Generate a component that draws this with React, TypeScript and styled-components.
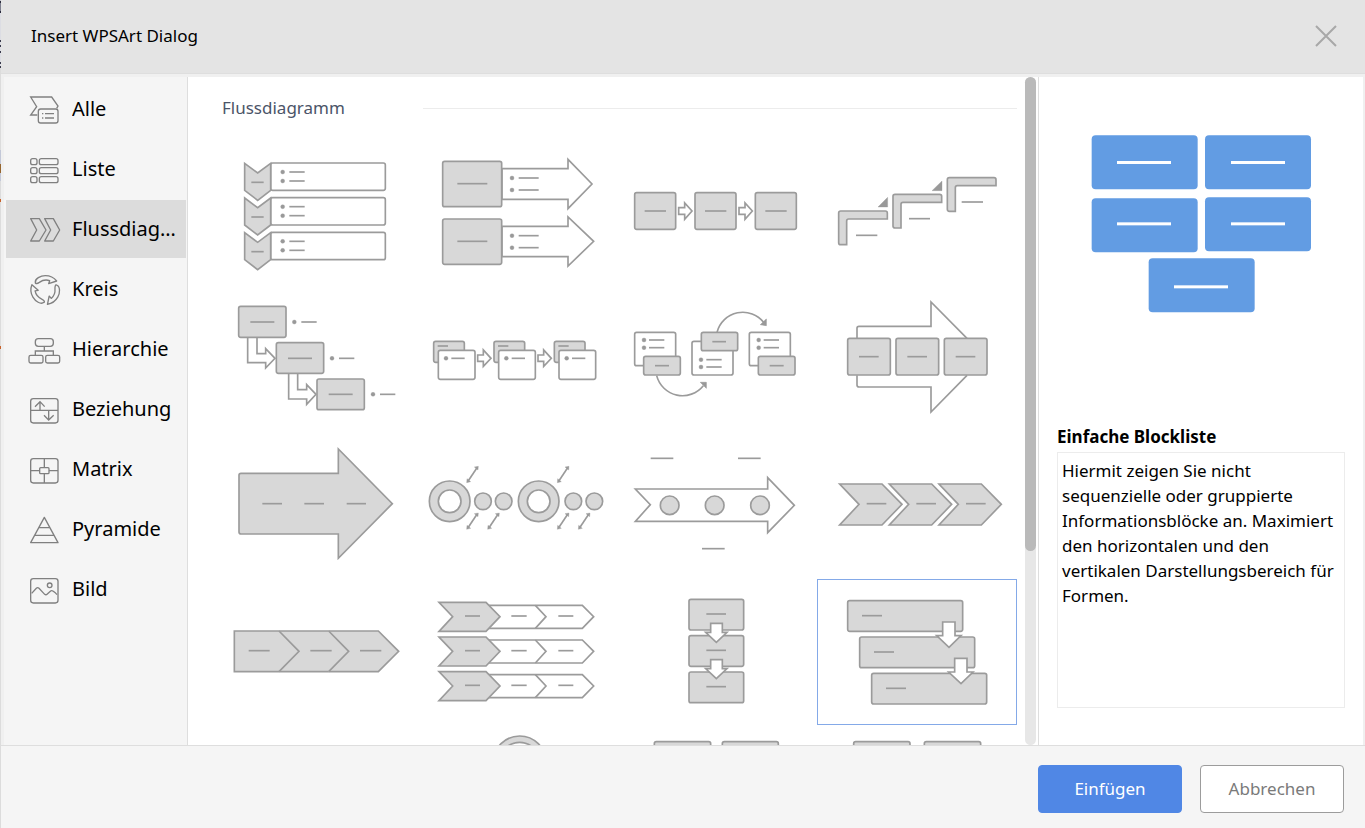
import React, { useState } from 'react';
import styled, { createGlobalStyle } from 'styled-components';

const GlobalStyle = createGlobalStyle`
  *, *::before, *::after { box-sizing: border-box; }
  body { margin: 0; }
  body, button, textarea { font-family: "Noto Sans", "Open Sans", sans-serif; }
`;

/* ---------- layout ---------- */

const Shell = styled.div`
  display: flex;
  height: 100vh;
  min-height: 480px;
  background: #f0f0f0;
  color: #000;
`;

/* Sliver of the document that shows beside the dialog. */
const DocumentEdge = styled.div`
  flex: 0 0 1px;
  background: linear-gradient(
    #c4c5ce 0 1px, #2a2b3c 1px 3px, #7d7f8e 3px 11px, #2a2b3c 11px 13px,
    #dcdde3 13px 40px, #3a3b4c 40px 42px, #dcdde3 42px 45px, #3a3b4c 45px 47px,
    #dcdde3 47px 51px, #3a3b4c 51px 53px, #dcdde3 53px 62px, #3a3b4c 62px 64px,
    #dcdde3 64px 66px, #3a3b4c 66px 68px, #dcdcdc 68px 150px, #c3c8d8 150px 164px,
    #96662f 164px 173px, #c3c8d8 173px 181px, #dcdcdc 181px 199px,
    #c8622a 199px 202px, #dcdcdc 202px 346px, #c8622a 346px 349px, #dcdcdc 349px
  );
`;

const Dialog = styled.section`
  flex: 1;
  min-width: 0;
  display: flex;
  flex-direction: column;
`;

const TitleBar = styled.header`
  flex: 0 0 74px;
  display: flex;
  align-items: center;
  justify-content: space-between;
  padding: 0 28px 2px 30px;
  background: #e4e4e4;
  border-bottom: 1px solid #dedede;
`;

const DialogTitle = styled.h1`
  margin: 0;
  font-size: 17px;
  line-height: 24px;
  font-weight: 400;
`;

const CloseButton = styled.button`
  display: flex;
  padding: 0;
  border: 0;
  background: none;
  cursor: pointer;
`;

const Body = styled.div`
  flex: 1;
  min-height: 0;
  display: flex;
  margin: 3px 2px 0 3px;
  background: #fff;
`;

const Sidebar = styled.nav`
  flex: 0 0 184px;
  min-width: 0;
  display: flex;
  flex-direction: column;
  gap: 2px;
  padding: 3px 1px 0 2px;
  background: #f5f5f5;
  border-right: 1px solid #dedede;
`;

const NavItem = styled.button<{ $active: boolean }>`
  flex: 0 0 58px;
  display: flex;
  align-items: center;
  gap: 10px;
  padding: 0 8px 0 22px;
  border: 0;
  background: ${(p) => (p.$active ? '#dcdcdc' : 'transparent')};
  color: #000;
  font-size: 20px;
  line-height: 28px;
  text-align: left;
  cursor: pointer;
`;

const NavLabel = styled.span`
  flex: 1;
  min-width: 0;
  overflow: hidden;
  text-overflow: ellipsis;
  white-space: nowrap;
`;

const NavIcon = styled.svg`
  flex: none;
  width: 34px;
  height: 34px;
  fill: none;
  stroke: #808080;
  stroke-width: 4px;
`;

const Gallery = styled.main`
  flex: 1;
  min-width: 0;
  overflow-y: auto;
  scrollbar-width: none;
  padding: 0 8px 0 29px;
`;

const GalleryHeading = styled.div`
  display: flex;
  align-items: center;
  height: 64px;
  padding: 0 0 2px 5px;
`;

const GalleryTitle = styled.h2`
  flex: 0 0 201px;
  margin: 0;
  color: #4b5468;
  font-size: 17px;
  line-height: 24px;
  font-weight: 400;
`;

const Rule = styled.hr`
  flex: 1;
  height: 1px;
  margin: 0;
  border: 0;
  background: #ececec;
`;

const Grid = styled.div`
  display: grid;
  grid-template-columns: repeat(4, 1fr);
  grid-auto-rows: 146px;
`;

const Tile = styled.button<{ $selected: boolean }>`
  display: flex;
  align-items: center;
  justify-content: center;
  min-width: 0;
  padding: 0;
  border: 0;
  outline: ${(p) => (p.$selected ? '1px solid #84a9e8' : 'none')};
  outline-offset: -1px;
  background: #fff;
  cursor: pointer;
`;

const Drawing = styled.svg`
  width: 200px;
  max-width: 100%;
  height: 146px;
  stroke: #9b9b9b;
  stroke-width: 5px;
  fill: #d8d8d8;
`;

const ScrollTrack = styled.div`
  flex: 0 0 11px;
  margin-right: 2px;
  border-radius: 6px;
  background: #e7e7e7;
`;

const ScrollThumb = styled.div`
  height: 71%;
  border-radius: 6px;
  background: #bababa;
`;

const Details = styled.aside`
  flex: 0 0 325px;
  display: flex;
  flex-direction: column;
  padding: 57px 18px 37px;
  border-left: 1px solid #dedede;
`;

const Preview = styled.svg`
  flex: none;
  align-self: center;
  width: 222px;
  height: 180px;
  fill: #629ce3;
`;

const DetailsTitle = styled.label`
  margin-top: 111px;
  margin-bottom: 3px;
  font-size: 17px;
  line-height: 24px;
  font-weight: 700;
`;

const Description = styled.textarea`
  flex: 1;
  min-height: 0;
  padding: 5px 4px;
  border: 1px solid #ececec;
  outline: none;
  resize: none;
  overflow: hidden;
  background: #fff;
  color: #000;
  font-size: 17px;
  line-height: 25px;
`;

const Footer = styled.footer`
  display: flex;
  justify-content: flex-end;
  gap: 18px;
  padding: 19px 21px 15px;
  background: #f5f5f5;
  border-top: 1px solid #dedede;
`;

const ActionButton = styled.button<{ $primary?: boolean }>`
  width: 144px;
  height: 48px;
  border: 1px solid ${(p) => (p.$primary ? '#5087e5' : '#9c9c9c')};
  border-radius: 4px;
  background: ${(p) => (p.$primary ? '#5087e5' : '#fff')};
  color: ${(p) => (p.$primary ? '#fff' : '#7a7a7a')};
  font-size: 17px;
  line-height: 24px;
  cursor: pointer;
`;

/* ---------- drawing parts (three units to a pixel) ---------- */

type BoxProps = { x: number; y: number; w: number; h: number; white?: boolean };
const Box = ({ x, y, w, h, white }: BoxProps) => (
  <rect x={x} y={y} width={w} height={h} rx={6} fill={white ? '#fff' : undefined} />
);

const Dash = ({ x, y, w }: { x: number; y: number; w: number }) => (
  <path d={`M${x} ${y}h${w}`} />
);

const Bullet = ({ x, y, gap = 20, w }: { x: number; y: number; gap?: number; w: number }) => (
  <>
    <circle cx={x} cy={y} r={6} fill="#999" stroke="#999" strokeWidth={1} />
    <Dash x={x + gap} y={y} w={w} />
  </>
);

const White = ({ d }: { d: string }) => <path d={d} fill="#fff" />;

const Repeat = ({ n, dx = 0, dy = 0, children }: { n: number; dx?: number; dy?: number; children: React.ReactNode }) => (
  <>
    {Array.from({ length: n }, (_, i) => (
      <g key={i} transform={`translate(${i * dx} ${i * dy})`}>
        {children}
      </g>
    ))}
  </>
);

const DoubleArrow = ({ x, y }: { x: number; y: number }) => (
  <g transform={`translate(${x} ${y})`}>
    <path d="M4 -4L30 -43" />
    <path d="M34 -47L22 -45L33 -36ZM-1 2L0 -10L11 -1Z" fill="#999" strokeWidth={1} />
  </g>
);

const Corner = ({ x, y }: { x: number; y: number }) => (
  <path
    transform={`translate(${x} ${y})`}
    d="M0 6a6 6 0 0 1 6-6H140a6 6 0 0 1 6 6V24H30a6 6 0 0 0-6 6V101H6a6 6 0 0 1-6-6Z"
  />
);

type Layout = { name: string; origin: [number, number]; art: React.ReactNode };

const layouts: Layout[] = [
  {
    name: 'Vertikale Chevronliste',
    origin: [21, 3],
    art: (
      <Repeat n={3} dy={104}>
        <Box x={182} y={69} w={344} h={82} white />
        <path d="M104 70L143 99L182 70V151L143 181L104 151Z" />
        <Dash x={124} y={127} w={37} />
        <Bullet x={218} y={96} w={46} />
        <Bullet x={218} y={123} w={46} />
      </Repeat>
    ),
  },
  {
    name: 'Pfeilliste',
    origin: [621, 3],
    art: (
      <>
        <White d="M876 86H1074V58L1146 132L1074 206V178H876Z" />
        <White d="M876 259H1074V231L1151 304L1074 378V350H876Z" />
        <Repeat n={2} dy={173}>
          <Box x={698} y={64} w={177} h={136} />
          <Dash x={742} y={131} w={90} />
          <Bullet x={906} y={114} w={60} />
          <Bullet x={906} y={150} w={60} />
        </Repeat>
      </>
    ),
  },
  {
    name: 'Einfacher Prozess',
    origin: [21, 3],
    art: (
      <>
        <Repeat n={3} dx={181}>
          <Box x={74} y={158} w={123} h={110} />
          <Dash x={104} y={213} w={64} />
        </Repeat>
        <Repeat n={2} dx={181}>
          <White d="M206 203H224V189L246 213L224 238V223H206Z" />
        </Repeat>
      </>
    ),
  },
  {
    name: 'Aufsteigende Schritte',
    origin: [621, 3],
    art: (
      <>
        <Corner x={686} y={213} />
        <Corner x={849} y={163} />
        <Corner x={1012} y={113} />
        <path d="M804 201L833 172V201ZM966 152L996 123V152Z" fill="#999" strokeWidth={1} />
        <Dash x={738} y={286} w={64} />
        <Dash x={897} y={236} w={63} />
        <Dash x={1055} y={186} w={64} />
      </>
    ),
  },
  {
    name: 'Absteigender Prozess',
    origin: [21, -9],
    art: (
      <>
        <White d="M113 142V218H167V234L195 205L167 176V191H141V142" />
        <White d="M236 251V327H290V343L318 313L290 284V299H263V251" />
        <Box x={86} y={49} w={142} h={93} />
        <Box x={199} y={158} w={142} h={92} />
        <Box x={321} y={267} w={142} h={92} />
        <Dash x={121} y={96} w={72} />
        <Dash x={234} y={205} w={72} />
        <Dash x={356} y={313} w={72} />
        <Bullet x={253} y={96} w={46} gap={21} />
        <Bullet x={366} y={205} w={46} gap={21} />
        <Bullet x={489} y={313} w={46} gap={21} />
      </>
    ),
  },
  {
    name: 'Akzentprozess',
    origin: [621, -9],
    art: (
      <>
        <Repeat n={3} dx={181}>
          <Box x={671} y={154} w={92} h={63} />
          <Dash x={683} y={168} w={31} />
          <Box x={685} y={181} w={110} h={87} white />
          <Bullet x={708} y={205} w={40} gap={16} />
        </Repeat>
        <Repeat n={2} dx={181}>
          <White d="M803 195H820V180L843 205L820 229V214H803Z" />
        </Repeat>
      </>
    ),
  },
  {
    name: 'Wechselnder Fluss',
    origin: [21, -9],
    art: (
      <>
        <Repeat n={2} dx={344}>
          <Box x={74} y={127} w={123} h={100} white />
          <Bullet x={102} y={150} w={46} gap={15} />
          <Bullet x={102} y={173} w={46} gap={15} />
          <Box x={101} y={199} w={110} h={56} />
          <Dash x={135} y={227} w={42} />
        </Repeat>
        <Box x={246} y={154} w={123} h={101} white />
        <Bullet x={273} y={209} w={46} gap={16} />
        <Bullet x={273} y={231} w={46} gap={16} />
        <Box x={274} y={127} w={109} h={55} />
        <Dash x={307} y={155} w={41} />
        <path d="M321 127A80 80 0 0 1 462 98M140 257A80 80 0 0 0 280 287" fill="none" />
        <path d="M451 104L469 87V107ZM271 277H289V295Z" fill="#999" strokeWidth={2} />
      </>
    ),
  },
  {
    name: 'Fortlaufender Blockprozess',
    origin: [621, -9],
    art: (
      <>
        <White d="M741 145V115q0-6 6-6H963V36L1071 145M741 256V285q0 6 6 6H963V366L1071 256" />
        <Repeat n={3} dx={145}>
          <Box x={713} y={145} w={128} h={110} />
          <Dash x={747} y={200} w={59} />
        </Repeat>
      </>
    ),
  },
  {
    name: 'Prozesspfeil',
    origin: [21, 9],
    art: (
      <>
        <path d="M87 136q0-6 6-6H385V57L547 221L385 385V312H93q-6 0-6-6Z" />
        <Dash x={157} y={221} w={59} />
        <Dash x={283} y={221} w={59} />
        <Dash x={410} y={221} w={58} />
      </>
    ),
  },
  {
    name: 'Kreisakzent-Zeitachse',
    origin: [621, 9],
    art: (
      <>
        {[719, 986].map((x) => (
          <g key={x}>
            <circle cx={x} cy={214} r={61} />
            <circle cx={x} cy={214} r={34} fill="#fff" />
          </g>
        ))}
        {[819, 881, 1090, 1153].map((x) => (
          <circle key={x} cx={x} cy={214} r={25} />
        ))}
        <DoubleArrow x={771} y={156} />
        <DoubleArrow x={1043} y={156} />
        <DoubleArrow x={771} y={296} />
        <DoubleArrow x={834} y={296} />
        <DoubleArrow x={1043} y={296} />
        <DoubleArrow x={1106} y={296} />
      </>
    ),
  },
  {
    name: 'Einfache Zeitachse',
    origin: [21, 9],
    art: (
      <>
        <White d="M76 177H473V143L553 226L473 308V274H76L121 224Z" />
        {[179, 314, 450].map((x) => (
          <circle key={x} cx={x} cy={226} r={28} />
        ))}
        <Dash x={122} y={85} w={68} />
        <Dash x={384} y={85} w={68} />
        <Dash x={276} y={356} w={68} />
      </>
    ),
  },
  {
    name: 'Einfacher Chevronprozess',
    origin: [621, 9],
    art: (
      <Repeat n={3} dx={149}>
        <path d="M689 162H816L876 223L816 285H689L747 223Z" />
        <Dash x={770} y={221} w={59} />
      </Repeat>
    ),
  },
  {
    name: 'Geschlossener Chevronprozess',
    origin: [21, 27],
    art: (
      <>
        <path d="M73 183H505L566 244L505 305H73Z" />
        <path d="M207 183L267 244L207 305M356 183L416 244L356 305" />
        <Dash x={116} y={242} w={63} />
        <Dash x={301} y={242} w={64} />
        <Dash x={450} y={242} w={64} />
      </>
    ),
  },
  {
    name: 'Chevronliste',
    origin: [621, 27],
    art: (
      <Repeat n={3} dy={104}>
        <White d="M830 106H1117L1151 140L1117 175H830Z" />
        <path d="M976 106L1008 140L976 175" fill="none" />
        <path d="M687 97H828L870 140L828 184H687L728 140Z" />
        <Dash x={765} y={138} w={45} />
        <Dash x={904} y={138} w={46} />
        <Dash x={1045} y={138} w={45} />
      </Repeat>
    ),
  },
  {
    name: 'Vertikaler Prozess',
    origin: [21, 27],
    art: (
      <>
        <Repeat n={3} dy={109}>
          <Box x={237} y={88} w={164} h={92} />
          <Dash x={289} y={132} w={59} />
        </Repeat>
        <Repeat n={2} dy={109}>
          <White d="M302 160H337V187H351L319 217L287 187H302Z" />
        </Repeat>
      </>
    ),
  },
  {
    name: 'Gestaffelter Prozess',
    origin: [621, 27],
    art: (
      <>
        <Repeat n={3} dx={36} dy={109}>
          <Box x={713} y={92} w={345} h={92} />
          <Dash x={756} y={137} w={60} />
        </Repeat>
        <Repeat n={2} dx={36} dy={109}>
          <White d="M998 156H1035V197H1053L1017 232L980 197H998Z" />
        </Repeat>
      </>
    ),
  },
  { name: 'Unterprozess', origin: [21, 465], art: null },
  {
    name: 'Kreisprozess',
    origin: [621, 465],
    art: (
      <>
        <circle cx={929} cy={577} r={79} />
        <circle cx={929} cy={577} r={60} fill="#fff" />
      </>
    ),
  },
  {
    name: 'Umgekehrte Liste',
    origin: [21, 465],
    art: (
      <>
        <Box x={133} y={515} w={169} h={110} />
        <Box x={337} y={515} w={168} h={110} />
      </>
    ),
  },
  {
    name: 'Schlangenprozess',
    origin: [621, 465],
    art: (
      <>
        <Box x={731} y={515} w={169} h={110} />
        <Box x={943} y={515} w={169} h={110} />
      </>
    ),
  },
];

const cycleArrow =
  'M106 848C104 836 122 827 136 827C150 827 162 833 170 843L146 851L149 842C138 838 128 840 118 847C112 851 106 852 106 848Z';

const categories: { label: string; top: number; icon: React.ReactNode }[] = [
  {
    label: 'Alle',
    top: 276,
    icon: (
      <>
        <path d="M112 345H92L110 320L92 291H155L174 318L170 325" />
        <rect x={115} y={327} width={59} height={42} rx={7} />
        <path d="M135 341H162M135 354H162M126 341H130M126 354H130" />
      </>
    ),
  },
  {
    label: 'Liste',
    top: 456,
    icon: [476, 503, 530].map((y) => (
      <g key={y}>
        <rect x={92} y={y} width={19} height={18} rx={6} />
        <rect x={118} y={y} width={56} height={18} rx={6} />
      </g>
    )),
  },
  {
    label: 'Flussdiagramm',
    top: 636,
    icon: (
      <path
        strokeLinejoin="round"
        d="M92 656H118L138 690L118 723H92L110 690ZM134 656H160L179 690L160 723H134L152 690Z"
      />
    ),
  },
  {
    label: 'Kreis',
    top: 816,
    icon: (
      <g strokeLinejoin="round">
        <path d={cycleArrow} />
        <path d={cycleArrow} transform="rotate(120 136 870)" />
        <path d={cycleArrow} transform="rotate(240 136 870)" />
      </g>
    ),
  },
  {
    label: 'Hierarchie',
    top: 36,
    icon: (
      <>
        <rect x={106} y={56} width={54} height={23} rx={9} />
        <path d="M133 79V93M106 106V93H160V106" />
        <rect x={87} y={106} width={42} height={23} rx={5} />
        <rect x={137} y={106} width={42} height={23} rx={5} />
      </>
    ),
  },
  {
    label: 'Beziehung',
    top: 216,
    icon: (
      <>
        <rect x={92} y={236} width={82} height={73} rx={8} />
        <path d="M92 271H174M120 270V245M105 260L120 245L134 260M146 272V299M132 286L146 300L161 286" />
      </>
    ),
  },
  {
    label: 'Matrix',
    top: 396,
    icon: (
      <>
        <rect x={92} y={416} width={82} height={73} rx={8} />
        <path d="M133 416V443M133 461V489M92 452H119M147 452H174" />
        <rect x={119} y={443} width={28} height={18} rx={3} />
      </>
    ),
  },
  {
    label: 'Pyramide',
    top: 576,
    icon: <path strokeLinejoin="round" d="M133 592L92 668H174ZM115 623H151M103 646H163" />,
  },
  {
    label: 'Bild',
    top: 756,
    icon: (
      <>
        <rect x={92} y={776} width={82} height={73} rx={8} />
        <circle cx={149} cy={796} r={7} />
        <path d="M95 820L109 805Q113 801 117 805L134 823Q138 826 142 822L152 813Q157 809 171 824" />
      </>
    ),
  },
];

const previewBlocks = [
  { x: 215, y: 406, lineX: 291, lineY: 483 },
  { x: 555, y: 406, lineX: 633, lineY: 483 },
  { x: 215, y: 595, lineX: 291, lineY: 667 },
  { x: 555, y: 592, lineX: 633, lineY: 667 },
  { x: 386, y: 775, lineX: 462, lineY: 856 },
];

export default function App() {
  const [category, setCategory] = useState('Flussdiagramm');
  const [selected, setSelected] = useState('Gestaffelter Prozess');

  return (
    <Shell>
      <GlobalStyle />
      <DocumentEdge />
      <Dialog aria-labelledby="dialog-title">
        <TitleBar>
          <DialogTitle id="dialog-title">Insert WPSArt Dialog</DialogTitle>
          <CloseButton type="button" aria-label="Schließen">
            <svg width="22" height="22" viewBox="0 0 22 22" stroke="#a8a8a8" strokeWidth="2">
              <path d="M1 1L21 21M21 1L1 21" />
            </svg>
          </CloseButton>
        </TitleBar>

        <Body>
          <Sidebar>
            {categories.map(({ label, top, icon }) => (
              <NavItem
                key={label}
                type="button"
                $active={label === category}
                aria-pressed={label === category}
                onClick={() => setCategory(label)}
              >
                <NavIcon viewBox={`84 ${top} 102 102`} aria-hidden="true">
                  {icon}
                </NavIcon>
                <NavLabel>{label}</NavLabel>
              </NavItem>
            ))}
          </Sidebar>

          <Gallery>
            <GalleryHeading>
              <GalleryTitle>Flussdiagramm</GalleryTitle>
              <Rule />
            </GalleryHeading>
            <Grid>
              {layouts.map(({ name, origin, art }) => (
                <Tile
                  key={name}
                  type="button"
                  aria-label={name}
                  $selected={name === selected}
                  onClick={() => setSelected(name)}
                >
                  <Drawing viewBox={`${origin[0]} ${origin[1]} 600 438`}>{art}</Drawing>
                </Tile>
              ))}
            </Grid>
          </Gallery>

          <ScrollTrack>
            <ScrollThumb />
          </ScrollTrack>

          <Details>
            <Preview viewBox="210 402 666 540" aria-hidden="true">
              {previewBlocks.map(({ x, y, lineX, lineY }) => (
                <g key={`${x}-${y}`}>
                  <rect x={x} y={y} width={318} height={162} rx={12} />
                  <rect x={lineX} y={lineY} width={162} height={9} fill="#fff" />
                </g>
              ))}
            </Preview>
            <DetailsTitle htmlFor="layout-description">Einfache Blockliste</DetailsTitle>
            <Description
              id="layout-description"
              readOnly
              value="Hiermit zeigen Sie nicht sequenzielle oder gruppierte Informationsblöcke an. Maximiert den horizontalen und den vertikalen Darstellungsbereich für Formen."
            />
          </Details>
        </Body>

        <Footer>
          <ActionButton type="button" $primary>
            Einfügen
          </ActionButton>
          <ActionButton type="button">Abbrechen</ActionButton>
        </Footer>
      </Dialog>
    </Shell>
  );
}
